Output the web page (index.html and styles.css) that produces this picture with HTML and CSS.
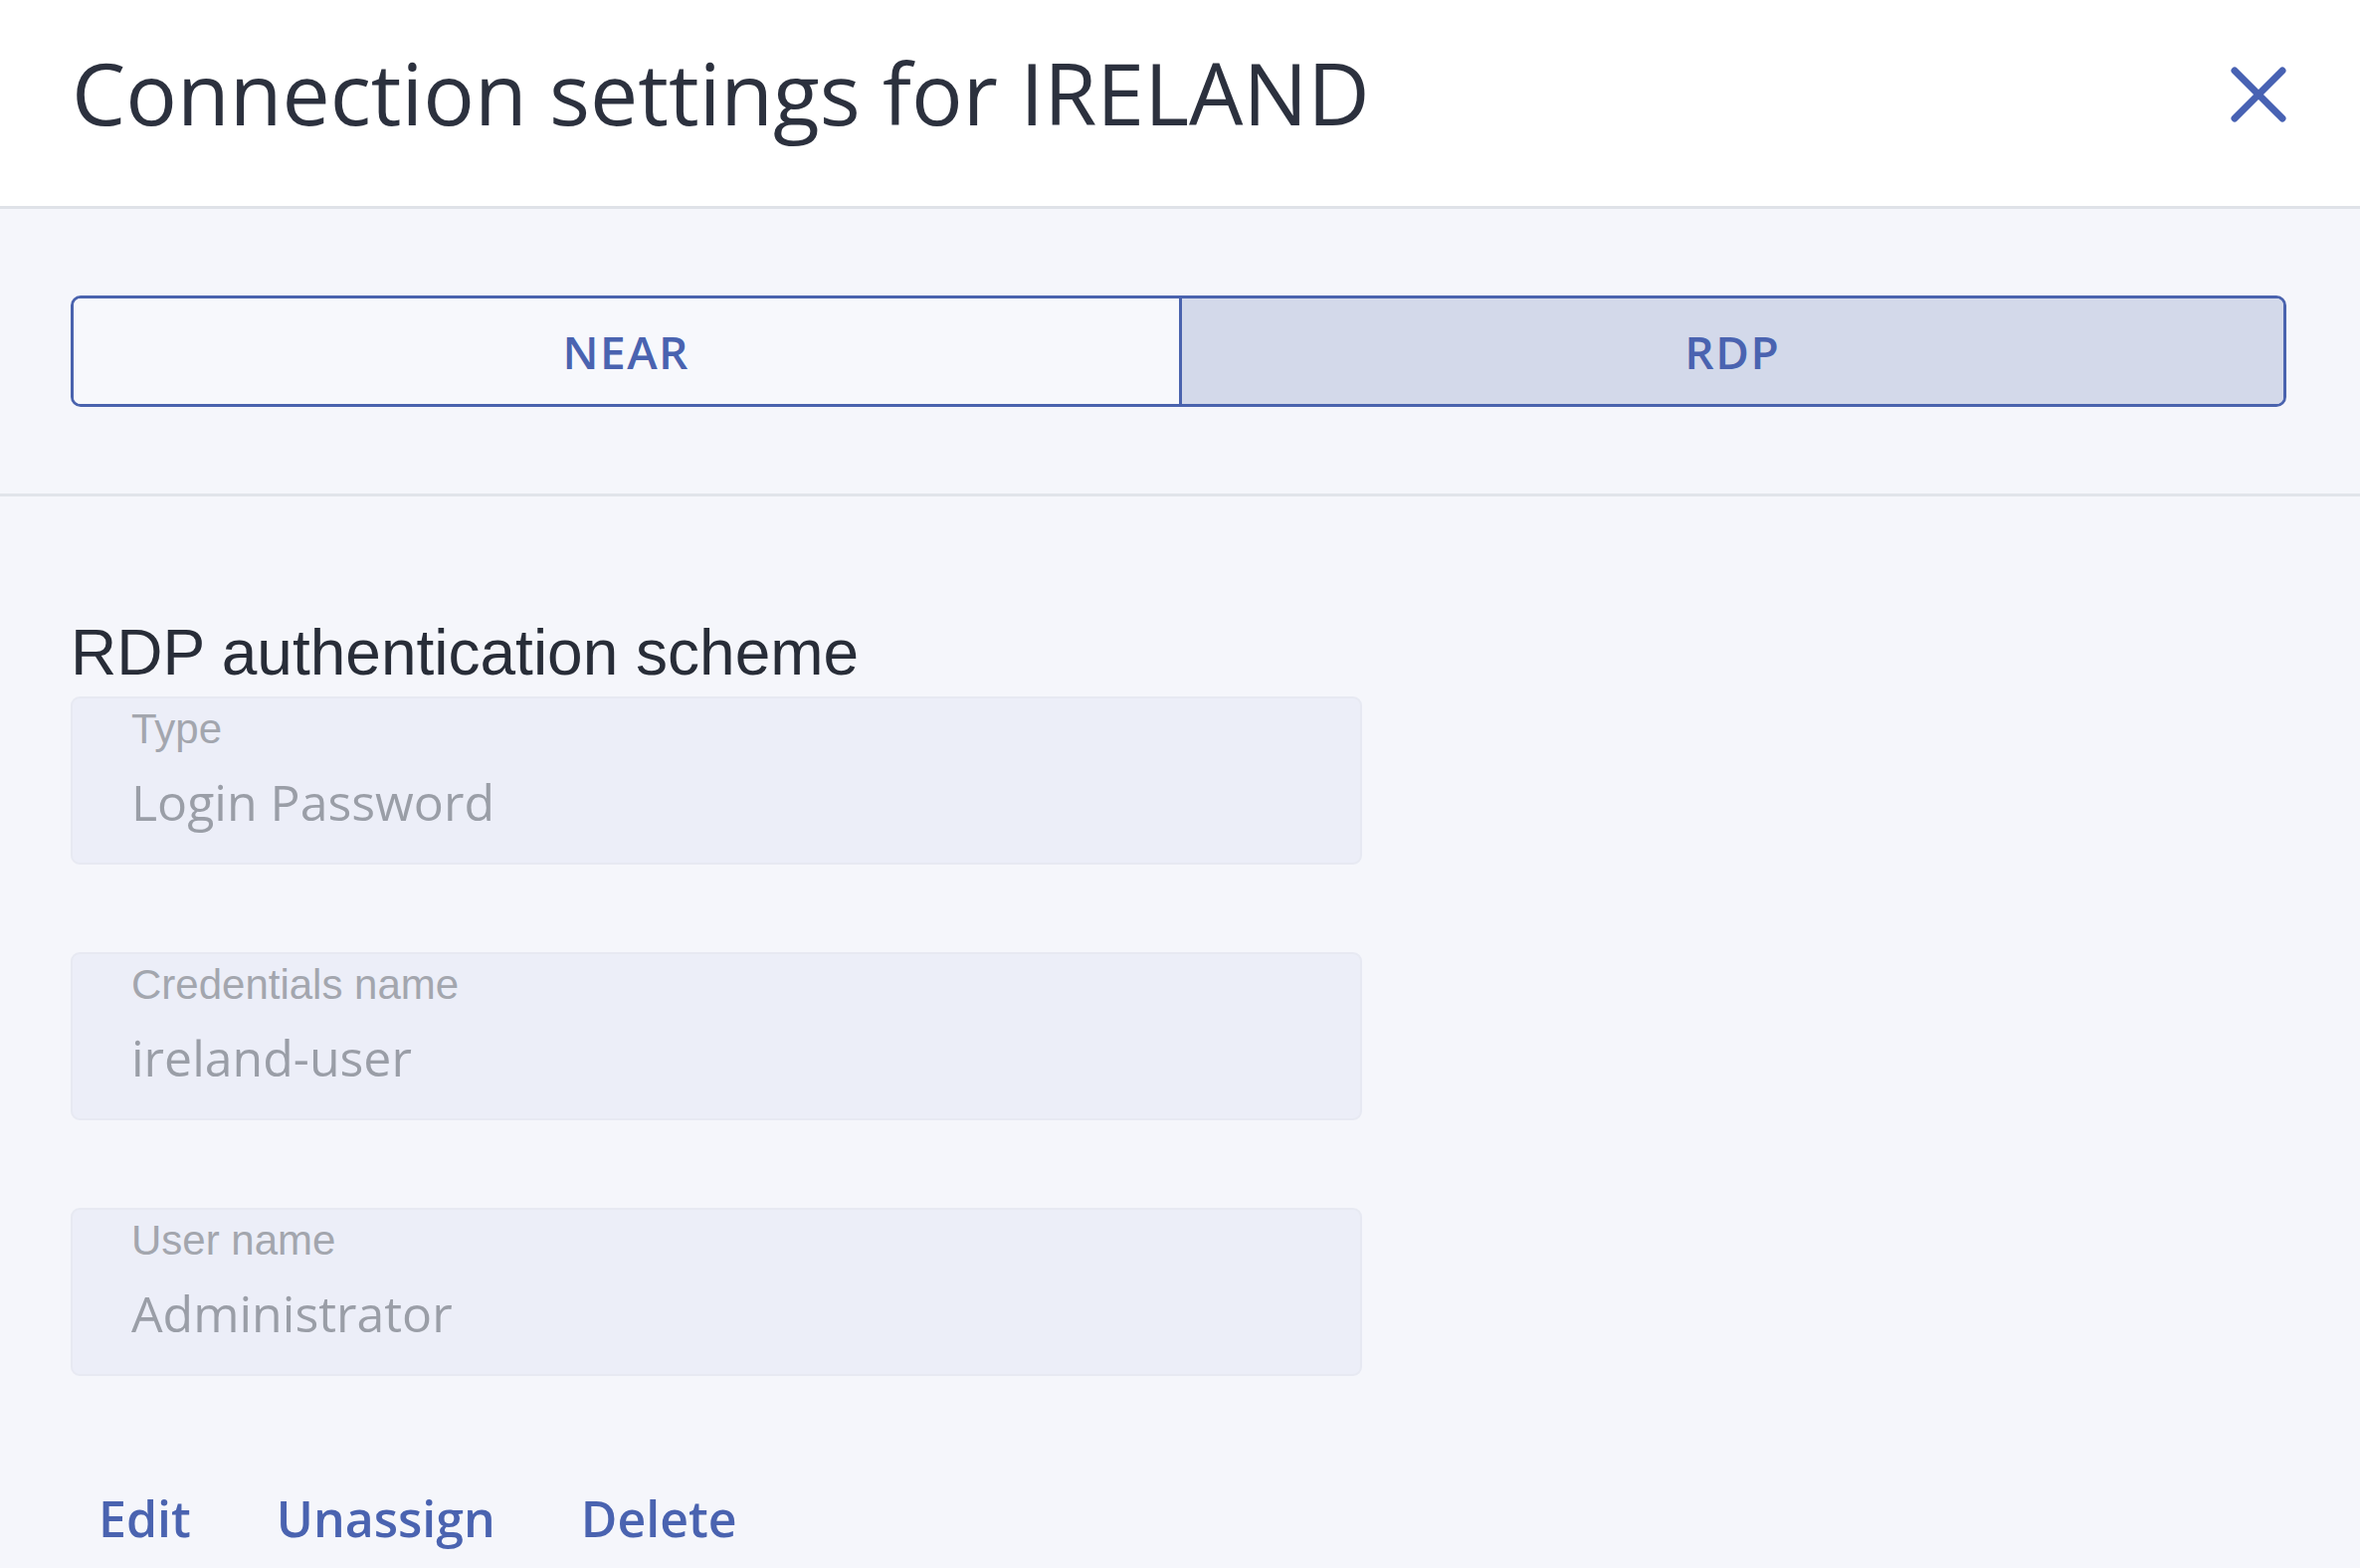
FILE: index.html
```html
<!DOCTYPE html>
<html lang="en">
<head>
<meta charset="utf-8">
<title>Connection settings for IRELAND</title>
<link rel="stylesheet" href="styles.css">
</head>
<body>
<div class="panel">
  <header class="panel-header">
    <h1 class="panel-title">Connection settings for IRELAND</h1>
    <button class="close-btn" type="button" aria-label="Close">
      <svg viewBox="0 0 56 56" width="56" height="56">
        <path d="M4 4 L52 52 M52 4 L4 52" stroke="currentColor" stroke-width="7" stroke-linecap="round" fill="none"/>
      </svg>
    </button>
  </header>

  <section class="protocol-bar">
    <div class="segmented">
      <button class="segment" type="button">NEAR</button>
      <button class="segment is-active" type="button">RDP</button>
    </div>
  </section>

  <section class="auth">
    <h2 class="auth-title">RDP authentication scheme</h2>

    <div class="field">
      <div class="field-label">Type</div>
      <div class="field-value">Login Password</div>
    </div>

    <div class="field">
      <div class="field-label">Credentials name</div>
      <div class="field-value">ireland-user</div>
    </div>

    <div class="field">
      <div class="field-label">User name</div>
      <div class="field-value">Administrator</div>
    </div>

    <div class="actions">
      <button class="link-btn" type="button">Edit</button>
      <button class="link-btn" type="button">Unassign</button>
      <button class="link-btn" type="button">Delete</button>
    </div>
  </section>
</div>
</body>
</html>
```

FILE: styles.css
```css
html, body {
  margin: 0;
  padding: 0;
}

body {
  background: #f5f6fb;
  font-family: "Open Sans", "Noto Sans", sans-serif;
  color: #2c313d;
  min-height: 1576px;
}

button {
  font: inherit;
  background: none;
  border: 0;
  padding: 0;
  margin: 0;
  cursor: pointer;
}

/* Header */
.panel-header {
  box-sizing: border-box;
  height: 210px;
  background: #ffffff;
  border-bottom: 3px solid #dfe2e8;
  display: flex;
  align-items: flex-start;
  justify-content: space-between;
  padding: 34px 74px 0 72px;
}

.panel-title {
  margin: 0;
  font-family: "Open Sans", sans-serif;
  font-weight: 400;
  font-size: 86px;
  line-height: normal;
  color: #2c313e;
}

.close-btn {
  margin-top: 33px;
  width: 56px;
  height: 56px;
  color: #4862b3;
  display: flex;
}

/* Protocol switch */
.protocol-bar {
  padding: 87px 74px 87px 71px;
  border-bottom: 3px solid #e1e4ea;
}

.segmented {
  display: grid;
  grid-template-columns: 1fr 1fr;
  height: 112px;
  box-sizing: border-box;
  border: 3px solid #4a63ae;
  border-radius: 10px;
  overflow: hidden;
}

.segment {
  font-family: "Open Sans", sans-serif;
  font-weight: 600;
  font-size: 46px;
  color: #4a63b0;
  background: #f7f8fc;
  letter-spacing: 1.5px;
}

.segment + .segment {
  border-left: 3px solid #4a63ae;
}

.segment.is-active {
  background: #d3d9ea;
}

/* Authentication details */
.auth {
  padding: 120px 71px 0 71px;
}

.auth-title {
  margin: 0 0 7px;
  font-family: "Liberation Sans", Arial, sans-serif;
  font-weight: 400;
  font-size: 64px;
  line-height: 74px;
  color: #282d38;
}

.field {
  width: 1298px;
  box-sizing: border-box;
  height: 169px;
  background: #eceef8;
  border: 2px solid #e7e9f2;
  border-radius: 9px;
  padding: 7px 60px 0 59px;
  margin-bottom: 88px;
}

.field:last-of-type {
  margin-bottom: 0;
}

.field-label {
  font-family: "Liberation Sans", Arial, sans-serif;
  font-size: 42px;
  line-height: 48px;
  color: #a3a6ae;
}

.field-value {
  margin-top: 16px;
  font-family: "Open Sans", sans-serif;
  font-size: 50px;
  line-height: 66px;
  color: #9a9ea7;
}

.actions {
  display: flex;
  gap: 30px;
  margin-top: 109px;
}

.link-btn {
  font-family: "Open Sans", sans-serif;
  font-weight: 600;
  font-size: 50px;
  line-height: normal;
  color: #4a63b0;
  padding: 0 28px;
}
```
